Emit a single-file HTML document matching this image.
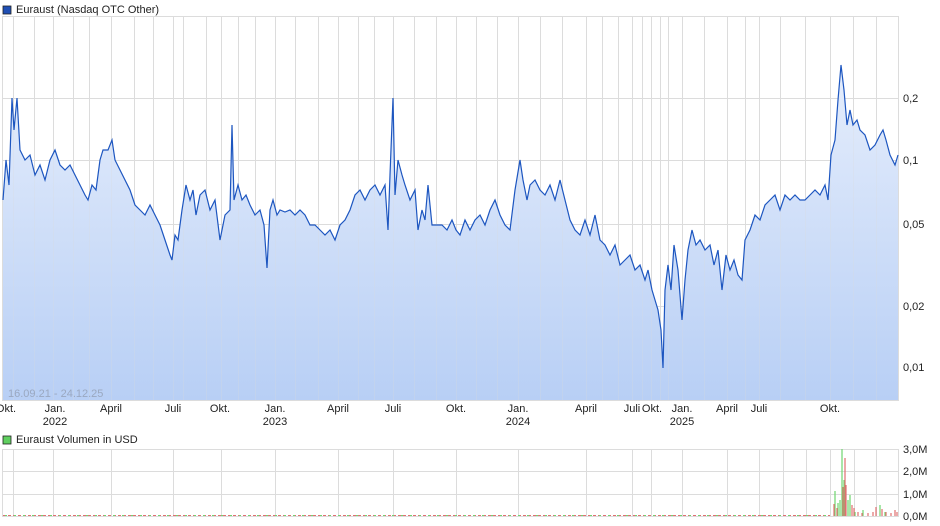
<!DOCTYPE html>
<html><head><meta charset="utf-8"><style>
body{margin:0;background:#fff;width:940px;height:526px;overflow:hidden;font-family:"Liberation Sans",sans-serif;}
svg{display:block}
text{font-family:"Liberation Sans",sans-serif;font-size:11px;fill:#222}
</style></head><body>
<svg width="940" height="526" viewBox="0 0 940 526">
<defs>
<linearGradient id="g" x1="0" y1="60" x2="0" y2="400" gradientUnits="userSpaceOnUse">
<stop offset="0" stop-color="#e6eefc"/><stop offset="1" stop-color="#b8cff5"/>
</linearGradient>
</defs>
<rect x="3" y="6" width="8" height="8" fill="#1f4fb4" stroke="#222" stroke-width="0.8"/>
<text x="16" y="13">Euraust (Nasdaq OTC Other)</text>
<g stroke="#dcdcdc" stroke-width="1">
<rect x="2.5" y="16.5" width="896" height="384" fill="none"/>
<line x1="3" y1="98.5" x2="898" y2="98.5"/><line x1="3" y1="160.5" x2="898" y2="160.5"/>
<line x1="3" y1="224.5" x2="898" y2="224.5"/><line x1="3" y1="306.5" x2="898" y2="306.5"/>
<line x1="3" y1="367.5" x2="898" y2="367.5"/>
</g>
<g id="vl" stroke="#dcdcdc" stroke-width="1">
<path d="M13.5 16V400M34.5 16V400M53.5 16V400M73.5 16V400M89.5 16V400M111.5 16V400M134.5 16V400M153.5 16V400M173.5 16V400M183.5 16V400M206.5 16V400M221.5 16V400M238.5 16V400M255.5 16V400M275.5 16V400M295.5 16V400M318.5 16V400M338.5 16V400M358.5 16V400M374.5 16V400M393.5 16V400M414.5 16V400M436.5 16V400M456.5 16V400M476.5 16V400M497.5 16V400M518.5 16V400M540.5 16V400M562.5 16V400M586.5 16V400M602.5 16V400M618.5 16V400M632.5 16V400M642.5 16V400M651.5 16V400M660.5 16V400M668.5 16V400M682.5 16V400M704.5 16V400M727.5 16V400M745.5 16V400M759.5 16V400M780.5 16V400M805.5 16V400M830.5 16V400M853.5 16V400M876.5 16V400"/>
</g>
<path fill="url(#g)" d="M3,400 L3,200 L6,160 L9,185 L12,98 L14,130 L17,98 L20,150 L25,160 L30,155 L35,175 L40,165 L45,180 L50,160 L55,150 L60,165 L65,170 L70,165 L75,175 L80,185 L85,195 L88,200 L92,185 L96,190 L100,160 L103,150 L108,150 L112,140 L115,160 L120,170 L125,180 L130,190 L135,205 L140,210 L145,215 L150,205 L155,215 L160,225 L165,240 L170,255 L172,260 L175,235 L178,240 L182,210 L186,185 L190,200 L193,190 L196,215 L200,195 L205,190 L210,210 L215,200 L220,240 L225,215 L230,210 L232,125 L234,200 L238,185 L242,200 L246,195 L250,205 L255,215 L260,210 L264,225 L267,268 L270,210 L273,200 L277,215 L280,210 L285,212 L290,210 L295,215 L300,210 L305,215 L310,225 L315,225 L320,230 L325,235 L330,230 L335,240 L340,225 L345,220 L350,210 L355,195 L360,190 L365,200 L370,190 L375,185 L380,195 L385,185 L388,230 L390,175 L393,98 L395,195 L398,160 L402,175 L405,185 L410,200 L415,190 L418,230 L422,210 L425,220 L428,185 L432,225 L437,225 L442,225 L447,230 L452,220 L456,230 L460,235 L465,220 L470,230 L475,220 L480,215 L485,225 L490,210 L495,200 L500,215 L505,225 L510,230 L515,190 L520,160 L523,180 L527,200 L530,185 L535,180 L540,190 L545,195 L550,185 L555,200 L560,180 L565,200 L570,220 L575,230 L580,235 L585,220 L590,235 L595,215 L600,240 L605,245 L610,255 L615,245 L620,265 L625,260 L630,255 L635,270 L640,265 L645,280 L648,270 L652,290 L655,300 L658,310 L661,330 L663,368 L665,290 L668,265 L671,290 L674,245 L678,270 L682,320 L685,280 L688,250 L692,230 L696,245 L700,240 L705,250 L710,245 L714,265 L718,250 L722,290 L726,255 L730,270 L734,260 L738,275 L742,280 L745,240 L750,230 L755,215 L760,220 L765,205 L770,200 L775,195 L780,210 L785,195 L790,200 L795,195 L800,200 L805,200 L810,195 L815,190 L820,195 L825,185 L828,200 L831,155 L835,140 L838,100 L841,65 L844,90 L847,125 L850,110 L853,125 L857,120 L860,130 L865,135 L870,150 L875,145 L880,135 L883,130 L886,140 L890,155 L895,165 L898,155 L898,400 Z"/>
<use href="#vl" opacity="0.25"/>
<path fill="none" stroke="#1d56c0" stroke-width="1.2" d="M3,200 L6,160 L9,185 L12,98 L14,130 L17,98 L20,150 L25,160 L30,155 L35,175 L40,165 L45,180 L50,160 L55,150 L60,165 L65,170 L70,165 L75,175 L80,185 L85,195 L88,200 L92,185 L96,190 L100,160 L103,150 L108,150 L112,140 L115,160 L120,170 L125,180 L130,190 L135,205 L140,210 L145,215 L150,205 L155,215 L160,225 L165,240 L170,255 L172,260 L175,235 L178,240 L182,210 L186,185 L190,200 L193,190 L196,215 L200,195 L205,190 L210,210 L215,200 L220,240 L225,215 L230,210 L232,125 L234,200 L238,185 L242,200 L246,195 L250,205 L255,215 L260,210 L264,225 L267,268 L270,210 L273,200 L277,215 L280,210 L285,212 L290,210 L295,215 L300,210 L305,215 L310,225 L315,225 L320,230 L325,235 L330,230 L335,240 L340,225 L345,220 L350,210 L355,195 L360,190 L365,200 L370,190 L375,185 L380,195 L385,185 L388,230 L390,175 L393,98 L395,195 L398,160 L402,175 L405,185 L410,200 L415,190 L418,230 L422,210 L425,220 L428,185 L432,225 L437,225 L442,225 L447,230 L452,220 L456,230 L460,235 L465,220 L470,230 L475,220 L480,215 L485,225 L490,210 L495,200 L500,215 L505,225 L510,230 L515,190 L520,160 L523,180 L527,200 L530,185 L535,180 L540,190 L545,195 L550,185 L555,200 L560,180 L565,200 L570,220 L575,230 L580,235 L585,220 L590,235 L595,215 L600,240 L605,245 L610,255 L615,245 L620,265 L625,260 L630,255 L635,270 L640,265 L645,280 L648,270 L652,290 L655,300 L658,310 L661,330 L663,368 L665,290 L668,265 L671,290 L674,245 L678,270 L682,320 L685,280 L688,250 L692,230 L696,245 L700,240 L705,250 L710,245 L714,265 L718,250 L722,290 L726,255 L730,270 L734,260 L738,275 L742,280 L745,240 L750,230 L755,215 L760,220 L765,205 L770,200 L775,195 L780,210 L785,195 L790,200 L795,195 L800,200 L805,200 L810,195 L815,190 L820,195 L825,185 L828,200 L831,155 L835,140 L838,100 L841,65 L844,90 L847,125 L850,110 L853,125 L857,120 L860,130 L865,135 L870,150 L875,145 L880,135 L883,130 L886,140 L890,155 L895,165 L898,155"/>
<text x="8" y="397" fill="#9aa4b8" style="fill:#9aa8c0">16.09.21 - 24.12.25</text>
<g>
<text x="903" y="102">0,2</text><text x="903" y="164">0,1</text><text x="903" y="228">0,05</text>
<text x="903" y="310">0,02</text><text x="903" y="371">0,01</text>
</g>
<g text-anchor="middle">
<text x="6" y="412">Okt.</text><text x="55" y="412">Jan.</text><text x="55" y="425">2022</text>
<text x="111" y="412">April</text><text x="173" y="412">Juli</text><text x="220" y="412">Okt.</text>
<text x="275" y="412">Jan.</text><text x="275" y="425">2023</text><text x="338" y="412">April</text>
<text x="393" y="412">Juli</text><text x="456" y="412">Okt.</text><text x="518" y="412">Jan.</text>
<text x="518" y="425">2024</text><text x="586" y="412">April</text><text x="632" y="412">Juli</text>
<text x="652" y="412">Okt.</text><text x="682" y="412">Jan.</text><text x="682" y="425">2025</text>
<text x="727" y="412">April</text><text x="759" y="412">Juli</text><text x="830" y="412">Okt.</text>
</g>
<rect x="3" y="436" width="8" height="8" fill="#5fcf5f" stroke="#222" stroke-width="0.8"/>
<text x="16" y="443">Euraust Volumen in USD</text>
<g stroke="#dcdcdc" stroke-width="1" fill="none">
<rect x="2.5" y="449.5" width="896" height="67"/>
<line x1="3" y1="471.5" x2="898" y2="471.5"/><line x1="3" y1="494.5" x2="898" y2="494.5"/>
<path d="M13.5 449V516M53.5 449V516M111.5 449V516M173.5 449V516M221.5 449V516M275.5 449V516M338.5 449V516M393.5 449V516M456.5 449V516M518.5 449V516M586.5 449V516M632.5 449V516M651.5 449V516M682.5 449V516M727.5 449V516M759.5 449V516M783.5 449V516M806.5 449V516M830.5 449V516M854.5 449V516M876.5 449V516"/>
</g>
<line x1="3" y1="515.5" x2="830" y2="515.5" stroke="#e07070" stroke-width="1" stroke-dasharray="3,2"/>
<line x1="5" y1="515.5" x2="830" y2="515.5" stroke="#6fd66f" stroke-width="1" stroke-dasharray="2,7"/>
<g stroke-width="1.2">
<path stroke="#6fd66f" d="M835 516V491M838 516V503M842 516V449M840 516V500M844 516V480M850 516V495M855 516V512M863 516V510M880 516V505M885 516V512M848 516V500"/>
<path stroke="#e07070" d="M834 516V504M837 516V508M843 516V487M845 516V458M846 516V485M852 516V505M854 516V508M858 516V512M862 516V513M868 516V513M873 516V512M876 516V507M882 516V509M886 516V512M891 516V513M895 516V510M897 516V512"/>
</g>
<g>
<text x="903" y="453">3,0M</text><text x="903" y="475">2,0M</text><text x="903" y="498">1,0M</text><text x="903" y="520">0,0M</text>
</g>
</svg>
</body></html>
